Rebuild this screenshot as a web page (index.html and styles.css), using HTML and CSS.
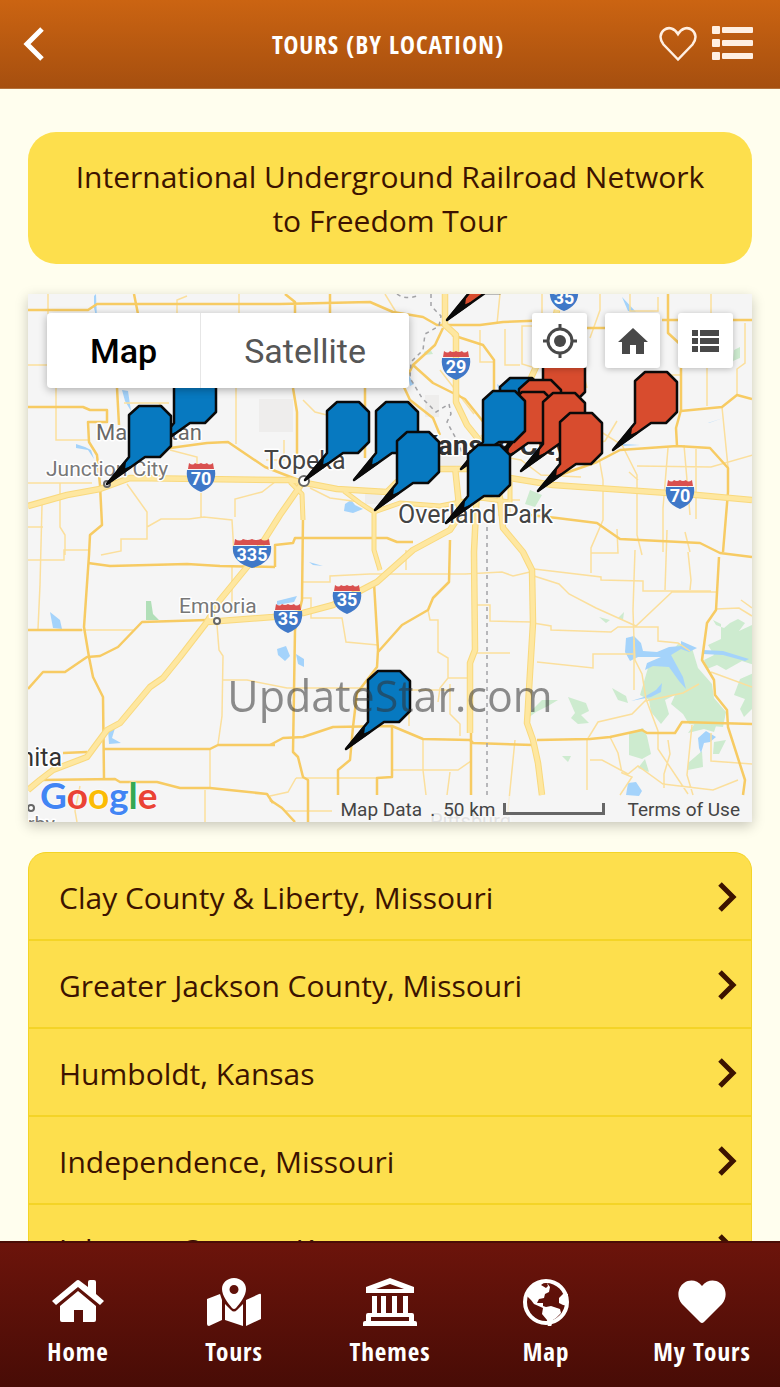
FILE: index.html
```html
<!DOCTYPE html>
<html lang="en">
<head>
    <meta charset="UTF-8">
    <meta name="viewport" content="width=device-width, initial-scale=1.0">
    <title>Tours (By Location)</title>
    <link rel="stylesheet" href="styles.css">
</head>
<body>
    <header class="top-bar">
        <button type="button" class="icon-btn back" aria-label="Back">
            <svg width="24" height="36" viewBox="0 0 24 36"><path d="M20 3 5 18l15 15" fill="none" stroke="#fff" stroke-width="5"/></svg>
        </button>
        <h1>TOURS (BY LOCATION)</h1>
        <div class="top-actions">
            <button type="button" class="icon-btn" aria-label="Favorite">
                <svg width="38" height="36" viewBox="0 0 38 36"><path d="M19 33.500 4.500 18.500C0 13 1 7 5 4c4.500-3.500 10.500-2 14 4 3.500-6 9.500-7.500 14-4 4 3 5 9 .5 14.500z" fill="none" stroke="#ffefe2" stroke-width="2.500"/></svg>
            </button>
            <button type="button" class="icon-btn" aria-label="List">
                <svg width="42" height="36" viewBox="0 0 42 36" fill="#ffefe2">
                    <rect x="0" y="0" width="8" height="8" rx="1"/><rect x="10" y="1" width="31" height="6" rx="1"/>
                    <rect x="0" y="13" width="8" height="8" rx="1"/><rect x="10" y="14" width="31" height="6" rx="1"/>
                    <rect x="0" y="26" width="8" height="8" rx="1"/><rect x="10" y="27" width="31" height="6" rx="1"/>
                </svg>
            </button>
        </div>
    </header>

    <main>
        <h2 class="tour-title">International Underground Railroad Network to Freedom Tour</h2>

        <section class="map" aria-label="Tour map">
            <svg class="map-canvas" viewBox="28 294 724 528" preserveAspectRatio="xMidYMid slice">
                <defs>
                    <g id="pin">
                        <path d="M0 0 22-27V-69L32-78H54L64-68V-38L53-27H38z" stroke="#0a0a0a" stroke-width="2.500" stroke-linejoin="round"/>
                        <path d="M0 0 18-22 17-14 24-17z" fill="#0a0a0a" stroke="#0a0a0a" stroke-width="2"/>
                    </g>
                    <g id="shield">
                        <path d="M-12-14q4 3 6 0 3 2 6 0 3 2 6 0 2 3 6 0l1 6h-26z" fill="#d9504f"/>
                        <path d="M-14-7h28q2 16-14 22-16-6-14-22z" fill="#3f78c8"/>
                    </g>
                    <g id="shield-wide">
                        <path d="M-17-14q5 3 8 0 5 2 9 0 4 2 9 0 3 3 8 0l1 6h-36z" fill="#d9504f"/>
                        <path d="M-19-7h38q2 16-19 22-21-6-19-22z" fill="#3f78c8"/>
                    </g>
                    <g id="highways" fill="none" stroke-linejoin="round">
                        <path d="M28 506l39-11 33-6 30-11 150 2h10l47 9 50 3 10-10 40-13h46l27 9 43 7 144 10 55 5"/>
                        <path d="M28 790l12-10 13-10 34-13 20-27 13-7 30-36 13-9 17-21 27-35 66-5 30-4 30-8 44-23 36-32 37-20 10-15-5-48"/>
                        <path d="M207 622l13-22 27-33 33-52 23-33M445 294v31l11 10v67l11 23 20 25M557 310l-4 20-23 50-45 65"/>
                        <path d="M485 445l15 53 3 30 20 24 9 18 1 53-6 100 6 17 5 23 4 32M477 490l-3 62 1 98-5 13v70"/>
                    </g>
                    <g id="branches" fill="none" stroke-linejoin="round">
                        <path d="M290 482l12 12 1 26M374 512v38l6 20M344 491l16 12 14 9 26-9 40 3 40-8 30 4v-20"/>
                    </g>
                </defs>

                <rect x="28" y="294" width="724" height="528" fill="#f5f5f5"/>
                <path d="M259 399h34v33h-34zM440 445h50v25h-50zM365 489h17v15h-17zM425 395h14v22h-14z" fill="#eeedec"/>

                <!-- forest -->
                <g fill="#cdebcf">
                    <path d="M146 601h5l2 13 6 6h-13z" fill="#b1dfb8"/>
                    <path d="M424 352l6-3 3 5-8 1zM734 350l6-3v11l-7 3zM530 490l12 5-7 12-10-3z"/>
                    <path d="M716 625l8 3 6-5 8-4 7 4-6 8 13-6v84l-8 8-4-8 5-10-11-4 6-16 14-6v-8l-12-4-16 9-9-5-10 4-3-9 10-5-6-10 13-6v-15l-8-4z"/>
                    <path d="M648 668l18-10 12-14 14 4 6 20 14 16 2 14 12 14-3 15-34-3-6-10-12-10 4-9-10 5 4 14-8 10-10-12-2-12-9-5z"/>
                    <path d="M599 617l11 3-4 3zM618 618l6-6-1 8zM612 688l14 8 2 7-10-3zM568 697l18 6 3 8-8 4 8 8-11 1-7-6 4-5zM530 712l12-12 16 0-10 6-12 6-8 6z"/>
                    <path d="M629 733l14-5 4 8 4 18-9 5-13-4zM638 768l7-9 4 13zM562 756h9l-3 6zM696 722l20 4-2 6-10-3-16 4zM688 763l14-12 1 16-15 3zM714 742l12-2-7 14-6 0z"/>
                </g>

                <!-- lakes and rivers -->
                <g fill="#a4d3fb">
                    <path d="M122 390l6 1 3 20-6-10zM76 444l9 3 6 3 3 9-6-9-12-2zM50 612l10 8 2 9-9-1zM108 730l7-2-3 10 9 5-12 1zM94 296l2-2 1 26-3-12z"/>
                    <path d="M345 504l6-4 4 5 8 4-10 4-9-2zM277 649l9-3 4 10-5 5-7-6zM296 654l8 5v8l-6-3zM277 601l20-5-3 6-17 3zM309 562l14 4-10-1zM408 374l6 10-4 2zM497 384l6 4-4 4zM622 444l18 1-18 1zM708 423l15-5-14 5zM622 297l14 15-8-1z"/>
                    <path d="M626 638l8-2 7 7 2 8 14 1 12-5 12-1v-5l16 7-8 4-8-3-10 6 12 22 3 12-7-8-10-14-16-1-8 4 2-7 14-6h-23l-8 4-5-9zM703 650l20 1 26 8-4 2-22-6-20-1zM644 697l12-7 6-7-1 9-10 5-20 4zM698 738l8-7 10 6-6 5-6 1-3 10-2-5zM626 795l2-12 8-1 6 9-3 5z"/>
                </g>

                <!-- minor roads -->
                <g fill="none" stroke="#fbdf9c" stroke-width="1.500">
                    <path d="M48 294v20M177 314v-14l10-4M239 294v19M28 365h27M56 388v52h34M124 403h45M159 403l10 16M236 388v56M28 483h64M60 483v44l5 8v20M42 505l-2 80-2 44M28 560h36v-10h25M28 527h15"/>
                    <path d="M127 484l20 28v27h-26v12l-20 4M147 527l14-8 28 0 15-2 28 3 2 34M201 493v25M170 450l27 7v9M235 517v-18l27-7 18-14M303 400l12 12 20 5M284 440v20h-18"/>
                    <path d="M217 625l2 25 4 6-1 60-4 28M223 680h24l40 8h90M210 749v39M205 790v32M80 786l-5 25 2 11M133 630H82M232 567v40"/>
                    <path d="M303 582h27v-6l40-2h95l37-2 11 4 17-4M303 598h8v20h31l4 24 32 3M406 570v-20M428 610l2 10h8v32l10 6v20l-8 10-2 14M448 678h25M450 684v30l10 10v12M378 690h72M409 700v26M423 739v31M392 770h66l13-9M423 770l3 25M450 772l-3 23M296 778h82M296 778l-8 14-18 4M284 811h48M515 740l-8 80"/>
                    <path d="M475 605h15v16l43 1M475 653h35M533 623l18 3v4l60 2 7-5h40v14l20 2 12 8M537 662l56 6v-14h40M534 576l25 8 10 10 27 14 40 18 36-34h44M534 569l67 8v3l42 1v10h68"/>
                    <path d="M591 573v-25l12-28v-40l-8-45M591 553h27l-1-24M642 555l-5-20v-60l-15-30-24-15M637 466l74 1 42-12M638 480l-9-8M663 552v-44l5-60M690 515l-6-70M690 552l-5-20M696 449v70M665 590l2-60M690 590l1-10-3-28M634 690v-50l-1-30 2-60"/>
                    <path d="M634 640l1 20 7 14 4 25 12 32v18l30 45M645 701l38-8 16-9M646 700l-14 14-34 8-11 18v50M590 760h12l26 14 10-8 25 18 50 6 25-10M610 737l8 16 4 20 10 4-12 18M668 740l2 14-6 20v14M692 725l-5 50 6 20M711 733v28l41 3M741 600l11 8M711 672l41 15M716 609l23-1 13 8"/>
                    <path d="M542 294v32h-20v38l10 3M600 294v16l-10 28M630 294v17h28v-14M711 294v26M750 294v-14M737 395v-26l8-6v-40M707 328v78M668 375h13M480 330v32h15M500 294l-3 30M520 365h-15v-36M440 370l34 44M385 294l11 18M481 435l12 20 28 5 20 15 40 2M510 490v25h-12M455 500h65M590 445l15-4 12-20M587 388l-10-40M722 407l6 60M310 488l20 10 30 4"/>
                </g>

                <!-- main roads -->
                <g fill="none" stroke="#f7cb63" stroke-width="2.500" stroke-linejoin="round">
                    <path d="M28 310h60l9-6h183l90-2 23 10 30 5 14 8h43l23-3 50-2M134 294l4 20M330 294v20M285 294l10 8v12M117 388l2 37M293 388l4 24v45M365 388v70"/>
                    <path d="M28 407h55l7 3h17v12H88l1 20 8 13 3 30 2 40-12 10-1 20-5 72 5 30 4 20 10 20 1 81"/>
                    <path d="M170 448l37-5 21-1 37 25 36 14M452 335l31 10 11 15v40M443 328l-8 17-22 20-10 20 7 15 23 18 7 17M413 365l20 18 32 16 20 25"/>
                    <path d="M587 328h18M662 320h90M668 294v39l13 12v65l-5 18 1 18M681 411l41-4 15-12 15 4M560 475l37-13 23-12 57-4 33 2 18 20v24l-5 60"/>
                    <path d="M530 515l27 3 40 5 23 16 80 4 20 10 32 4M719 557l-3 53-9 13-5 37 12 20 1 15 12 15 1 17 17 53-2 15"/>
                    <path d="M537 740l53-1 20-2 32-7 5 3h28l7-11 70 2M270 745l13-7 20-1 30-10 59-1 31 13 47 1 3 3 60 2"/>
                    <path d="M392 727v50l-15 1v17M353 727l-3 33-12 10v25M353 727l4-34 20-26 1-17-4-67M378 652l24-27 26-15 5-12 16-16 1-42"/>
                    <path d="M303 518l-1 82-7 30-2 122 5 5 5 20 5 3v42M270 800l12 8 13 14M275 567v-22l18-2 2-5h92l10 4h16"/>
                    <path d="M88 563l22 3 77-2 33 2 55 1M28 630h54M28 689l15-17h22l22-15 13-1 18-9 24-25 65-2"/>
                    <path d="M103 749h107l8-4h57M63 753l24-1M40 780l75-1 5 3h37l23 6h30l57 6 6 9M471 663v132"/>
                </g>

                <!-- highways: darker edge under a light centre -->
                <use href="#branches" stroke="#f9d97d" stroke-width="5"/>
                <use href="#highways" stroke="#f9d97d" stroke-width="6.500"/>
                <use href="#branches" stroke="#fee7a0" stroke-width="3"/>
                <use href="#highways" stroke="#fee7a0" stroke-width="4.500"/>

                <!-- state line -->
                <path d="M397 294q8 6 20 2M431 294v12l10 10-2 10-14 8-2 16-12 12-1 16 12 20 14 14 13-8 2 10-4 8 12 22 4 12M487 527v270" fill="none" stroke="#a3a3a6" stroke-width="1.500" stroke-dasharray="4 4"/>

                <g class="shields">
                    <use href="#shield" x="201" y="477"/><text x="201" y="485">70</text>
                    <use href="#shield" x="680" y="494"/><text x="680" y="502">70</text>
                    <use href="#shield" x="456" y="365"/><text x="456" y="373">29</text>
                    <use href="#shield" x="564" y="296"/><text x="564" y="304">35</text>
                    <use href="#shield" x="347" y="599"/><text x="347" y="606">35</text>
                    <use href="#shield" x="288" y="618"/><text x="288" y="625">35</text>
                    <use href="#shield-wide" x="252" y="553"/><text x="252" y="561">335</text>
                </g>

                <g class="places">
                    <text x="96" y="440" font-size="22" fill="#686868">Manhattan</text>
                    <text x="46" y="476" font-size="21" fill="#777">Junction City</text>
                    <text x="264" y="469" font-size="25">Topeka</text>
                    <text x="420" y="455" font-size="28" font-weight="700" fill="#333">Kansas City</text>
                    <text x="398" y="523" font-size="25">Overland Park</text>
                    <text x="179" y="613" font-size="21" fill="#777">Emporia</text>
                    <text x="62" y="766" font-size="25" text-anchor="end" fill="#333">Wichita</text>
                    <text x="55" y="831" font-size="20" text-anchor="end" fill="#777">Derby</text>
                    <text x="430" y="828" font-size="20" fill="#b5b5b5">Pittsburg</text>
                </g>
                <g fill="#fff" stroke="#666" stroke-width="2">
                    <circle cx="107" cy="484" r="3"/><circle cx="304" cy="481" r="5"/><circle cx="217" cy="621" r="3"/><circle cx="31" cy="808" r="3"/>
                </g>

                <g fill="#d84c2e">
                    <use href="#pin" x="447" y="320"/>
                    <use href="#pin" x="521" y="430"/>
                    <use href="#pin" x="613" y="450"/>
                </g>
                <use href="#pin" x="478" y="456" fill="#0779c0"/>
                <g fill="#d84c2e">
                    <use href="#pin" x="497" y="458"/>
                    <use href="#pin" x="490" y="470"/>
                    <use href="#pin" x="521" y="471"/>
                    <use href="#pin" x="538" y="491"/>
                </g>
                <g fill="#0779c0">
                    <use href="#pin" x="152" y="450"/>
                    <use href="#pin" x="107" y="484"/>
                    <use href="#pin" x="305" y="480"/>
                    <use href="#pin" x="354" y="480"/>
                    <use href="#pin" x="375" y="510"/>
                    <use href="#pin" x="461" y="469"/>
                    <use href="#pin" x="446" y="523"/>
                    <use href="#pin" x="346" y="749"/>
                </g>
            </svg>

            <div class="map-controls">
                <div class="map-type">
                    <button type="button" class="active">Map</button>
                    <button type="button">Satellite</button>
                </div>
                <div class="map-tools">
                    <button type="button" aria-label="My location">
                        <svg width="34" height="34" viewBox="0 0 34 34"><circle cx="17" cy="17" r="12" fill="none" stroke="#484848" stroke-width="3"/><circle cx="17" cy="17" r="6" fill="#484848"/><path d="M17 0v6M17 28v6M0 17h6M28 17h6" stroke="#484848" stroke-width="3"/></svg>
                    </button>
                    <button type="button" aria-label="Reset map">
                        <svg width="30" height="28" viewBox="0 0 30 28"><path d="M15 1 0 15h4v12h8v-9h6v9h8V15h4z" fill="#484848"/></svg>
                    </button>
                    <button type="button" aria-label="Show list">
                        <svg width="28" height="24" viewBox="0 0 28 24"><path d="M0 1h6v6H0zM8 1h19v6H8zM0 9h6v6H0zM8 9h19v6H8zM0 17h6v6H0zM8 17h19v6H8z" fill="#484848"/></svg>
                    </button>
                </div>
            </div>

            <div class="google" aria-label="Google"><span class="g-blue">G</span><span class="g-red">o</span><span class="g-yellow">o</span><span class="g-blue">g</span><span class="g-green">l</span><span class="g-red">e</span></div>

            <div class="map-legend">
                <span>Map Data</span>
                <span class="dot">.</span>
                <span>50 km</span>
                <span class="scale"></span>
                <a href="#">Terms of Use</a>
            </div>
        </section>

        <ul class="tour-list">
            <li><a href="#">Clay County &amp; Liberty, Missouri <svg width="20" height="30" viewBox="0 0 20 30"><path d="M2 2l13 13L2 28"/></svg></a></li>
            <li><a href="#">Greater Jackson County, Missouri <svg width="20" height="30" viewBox="0 0 20 30"><path d="M2 2l13 13L2 28"/></svg></a></li>
            <li><a href="#">Humboldt, Kansas <svg width="20" height="30" viewBox="0 0 20 30"><path d="M2 2l13 13L2 28"/></svg></a></li>
            <li><a href="#">Independence, Missouri <svg width="20" height="30" viewBox="0 0 20 30"><path d="M2 2l13 13L2 28"/></svg></a></li>
            <li><a href="#">Johnson County, Kansas <svg width="20" height="30" viewBox="0 0 20 30"><path d="M2 2l13 13L2 28"/></svg></a></li>
        </ul>
    </main>

    <nav class="tab-bar">
        <a href="#">
            <svg width="54" height="48" viewBox="0 0 54 48" fill="#fff">
                <path d="M27 13 45 28v14q0 2-2 2H32V32h-9v12H11q-2 0-2-2V28z"/>
                <path d="M27 2q1 0 2 1l8 6V4q0-2 2-2h4q2 0 2 2v12l8 7-4 4L27 9 5 27l-4-4L25 3q1-1 2-1z"/>
            </svg>
            Home
        </a>
        <a href="#">
            <svg width="54" height="48" viewBox="0 0 54 48" fill="#fff">
                <path fill-rule="evenodd" d="M27 0c7 0 12 5 12 11 0 7-6 14-10 19q-2 2-4 0C21 25 15 18 15 11 15 5 20 0 27 0zm0 7a4 4 0 1 0 0 9 4 4 0 0 0 0-9z"/>
                <path d="M0 21 13 16 15 22V42L2 48Q0 48 0 46zM18 26 24 32Q27 35 30 32L36 26V48L18 42zM39 22 52 16Q54 15 54 17V41L39 48z"/>
            </svg>
            Tours
        </a>
        <a href="#">
            <svg width="54" height="48" viewBox="0 0 54 48" fill="#fff">
                <path fill-rule="evenodd" d="M27 0 51 9v6H3V9zM13 11h28l-14-5z"/>
                <path d="M9 18h5v17H9zM18 18h5v17h-5zM29 18h5v17h-5zM40 18h5v17h-5z"/>
                <path fill-rule="evenodd" d="M5 35h44q2 0 2 2v6h1q2 0 2 2v3H0v-3q0-2 2-2h1v-6q0-2 2-2zm3 4v4h38v-4z"/>
            </svg>
            Themes
        </a>
        <a href="#">
            <svg width="48" height="48" viewBox="0 0 48 48">
                <circle cx="24" cy="24" r="21" fill="none" stroke="#fff" stroke-width="4"/>
                <path fill="#fff" d="M6 13 14 5l9-1-4 3 5 3 2-2-1-3 3 4-1 5-4 2-1 4-5 1-2 4 6 0v3l3 1 5-1 9 3 1 4-5 5-3 2-2 7-3 1-1-8-5-6 1-6-9-4-3-4-5-5zM46 16l-5 0-4 4 0 5 4 2 5 1z"/>
            </svg>
            Map
        </a>
        <a href="#">
            <svg width="50" height="48" viewBox="0 0 50 48"><path fill="#fff" d="M25 45q-1 0-2-1L5 26C-1 19 1 9 7 5c6-4 13-3 18 3 5-6 12-7 18-3 6 4 8 14 2 21L27 44q-1 1-2 1z"/></svg>
            My Tours
        </a>
    </nav>

    <div class="watermark">UpdateStar.com</div>
</body>
</html>
```
FILE: styles.css
```css
:root {
    --cream: #fffeee;
    --yellow: #fddf4d;
    --yellow-line: #f4d426;
    --brown: #3c1300;
    --ui-font: 'Open Sans', sans-serif;
    --bar-font: 'Open Sans Condensed', 'Liberation Sans Narrow', 'Open Sans', sans-serif;
    --map-font: 'Roboto', sans-serif;
}

* {
    margin: 0;
    padding: 0;
    box-sizing: border-box;
}

body {
    height: 100vh;
    display: flex;
    flex-direction: column;
    overflow: hidden;
    background: var(--cream);
    color: var(--brown);
    font-family: var(--ui-font);
}

button {
    border: none;
    background: none;
    font: inherit;
    cursor: pointer;
}

a {
    color: inherit;
    text-decoration: none;
}

svg {
    display: block;
}

/* Header */
.top-bar {
    flex: none;
    display: grid;
    grid-template-columns: 1fr auto 1fr;
    align-items: center;
    height: 89px;
    padding: 0 26px 0 22px;
    background: linear-gradient(#cb6412, #a64f0f);
    border-bottom: 1px solid #b5713a;
}

.top-bar h1 {
    color: #fff;
    font-family: var(--bar-font);
    font-size: 25px;
    font-weight: 700;
    letter-spacing: 1px;
}

.icon-btn.back {
    justify-self: start;
}

.top-actions {
    display: flex;
    justify-content: flex-end;
    gap: 15px;
}

/* Content */
main {
    flex: 1;
    min-height: 0;
    overflow: hidden;
    padding: 43px 28px 0;
}

.tour-title {
    padding: 23px 40px 21px;
    background: var(--yellow);
    border-radius: 28px;
    font-size: 30px;
    line-height: 44px;
    font-weight: 400;
    text-align: center;
}

/* Map */
.map {
    position: relative;
    height: 528px;
    margin: 30px 0;
    overflow: hidden;
    font-family: var(--map-font);
    box-shadow: 0 4px 12px rgba(0, 0, 0, 0.22);
}

.map-canvas {
    width: 100%;
    height: 100%;
}

.shields text {
    fill: #fff;
    font-size: 18px;
    font-weight: 700;
    text-anchor: middle;
}

.places {
    fill: #444;
}

.places text {
    paint-order: stroke;
    stroke: #fff;
    stroke-width: 3px;
    stroke-linejoin: round;
}

.map-controls {
    position: absolute;
    top: 19px;
    left: 19px;
    right: 19px;
    display: flex;
    justify-content: space-between;
    align-items: flex-start;
}

.map-type {
    display: flex;
    background: #fff;
    border-radius: 4px;
    box-shadow: 0 2px 8px rgba(0, 0, 0, 0.3);
}

.map-type button {
    height: 75px;
    padding: 0 43px;
    color: #565656;
    font-size: 34px;
}

.map-type .active {
    color: #000;
    font-weight: 500;
    border-right: 1px solid #e6e6e6;
}

.map-tools {
    display: flex;
    gap: 18px;
}

.map-tools button {
    display: grid;
    place-items: center;
    width: 55px;
    height: 55px;
    background: #fff;
    border-radius: 3px;
    box-shadow: 0 1px 6px rgba(0, 0, 0, 0.25);
}

.google {
    position: absolute;
    left: 12px;
    bottom: 4px;
    font-family: 'Lato', sans-serif;
    font-size: 37px;
    line-height: 46px;
    font-weight: 700;
    text-shadow: 0 0 2px #fff, 0 0 2px #fff;
}

.g-blue { color: #4285f4; }
.g-red { color: #ea4335; }
.g-yellow { color: #fbbc05; }
.g-green { color: #34a853; }

.map-legend {
    position: absolute;
    right: 0;
    bottom: 0;
    display: flex;
    align-items: center;
    height: 26px;
    padding: 0 12px 0 8px;
    background: rgba(245, 245, 245, 0.7);
    color: #444;
    font-size: 19px;
}

.dot {
    margin: 0 8px;
}

.scale {
    width: 102px;
    height: 12px;
    margin: 0 23px 0 7px;
    border: 3px solid #666;
    border-top: none;
}

/* Tour list */
.tour-list {
    list-style: none;
    background: var(--yellow);
    border: 1px solid var(--yellow-line);
    border-radius: 18px 18px 0 0;
}

.tour-list a {
    display: flex;
    justify-content: space-between;
    align-items: center;
    height: 88px;
    padding: 2px 13px 0 30px;
    border-bottom: 2px solid var(--yellow-line);
    font-size: 30px;
}

.tour-list path {
    fill: none;
    stroke: var(--brown);
    stroke-width: 5;
}

/* Bottom tabs */
.tab-bar {
    flex: none;
    display: grid;
    grid-template-columns: repeat(5, 1fr);
    height: 146px;
    padding-top: 35px;
    background: linear-gradient(#6c140b, #480c06);
    border-top: 2px solid #4a0d06;
}

.tab-bar a {
    display: flex;
    flex-direction: column;
    align-items: center;
    gap: 8px;
    color: #fff;
    font-family: var(--bar-font);
    font-size: 25px;
    line-height: 34px;
    font-weight: 700;
    letter-spacing: 1px;
    white-space: nowrap;
}

.watermark {
    position: fixed;
    inset: 0;
    display: flex;
    justify-content: center;
    align-items: center;
    padding-top: 4px;
    color: rgba(50, 50, 50, 0.55);
    font-size: 43px;
    pointer-events: none;
}
```
